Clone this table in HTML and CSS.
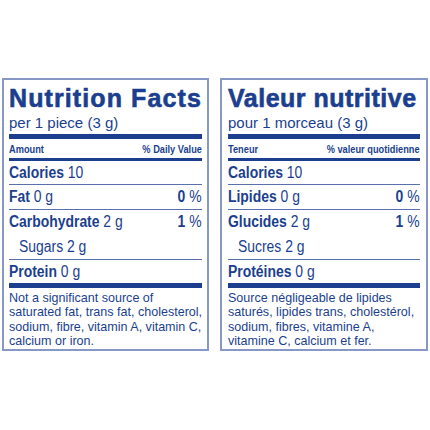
FILE: index.html
```html
<!DOCTYPE html>
<html lang="en">
<head>
<meta charset="utf-8">
<link rel="stylesheet" href="styles.css">
</head>
<body>
<div class="page">
  <section class="panel panel-en">
    <h1 class="title title-en">Nutrition Facts</h1>
    <div class="serving">per 1 piece (3 g)</div>
    <div class="bar-thick"></div>
    <div class="head-row"><span class="cl">Amount</span><span class="cr">% Daily Value</span></div>
    <div class="bar-mid"></div>
    <div class="row row-cal"><span class="cl"><b>Calories</b> 10</span></div>
    <div class="row row-line"><span class="cl"><b>Fat</b> 0 g</span><span class="cr"><b>0</b> %</span></div>
    <div class="row row-line"><span class="cl"><b>Carbohydrate</b> 2 g</span><span class="cr"><b>1</b> %</span></div>
    <div class="row row-sub"><span class="cl">Sugars 2 g</span></div>
    <div class="row row-line row-last"><span class="cl"><b>Protein</b> 0 g</span></div>
    <div class="bar-end"></div>
    <p class="note">Not a significant source of<br>saturated fat, trans fat, cholesterol,<br>sodium, fibre, vitamin A, vitamin C,<br>calcium or iron.</p>
  </section>
  <section class="panel panel-fr">
    <h1 class="title title-fr">Valeur nutritive</h1>
    <div class="serving">pour 1 morceau (3 g)</div>
    <div class="bar-thick"></div>
    <div class="head-row"><span class="cl">Teneur</span><span class="cr">% valeur quotidienne</span></div>
    <div class="bar-mid"></div>
    <div class="row row-cal"><span class="cl"><b>Calories</b> 10</span></div>
    <div class="row row-line"><span class="cl"><b>Lipides</b> 0 g</span><span class="cr"><b>0</b> %</span></div>
    <div class="row row-line"><span class="cl"><b>Glucides</b> 2 g</span><span class="cr"><b>1</b> %</span></div>
    <div class="row row-sub"><span class="cl">Sucres 2 g</span></div>
    <div class="row row-line row-last"><span class="cl"><b>Protéines</b> 0 g</span></div>
    <div class="bar-end"></div>
    <p class="note">Source négligeable de lipides<br>saturés, lipides trans, cholestérol,<br>sodium, fibres, vitamine A,<br>vitamine C, calcium et fer.</p>
  </section>
</div>
</body>
</html>
```
FILE: styles.css
```css
* { box-sizing: border-box; }
body {
  margin: 0;
  background: #fff;
  color: #1b3f8e;
  font-family: "Liberation Sans", Arial, sans-serif;
}
.page {
  display: flex;
  gap: 11px;
  padding: 78px 0 0 2px;
}
.panel {
  height: 273px;
  border: 2px solid #8797c6;
  padding: 4px 5px 0 5px;
  overflow: hidden;
}
.panel-en { width: 207px; }
.panel-fr { width: 208px; padding: 4px 6px 0 6px; }
.title {
  margin: 0;
  font-size: 25px;
  line-height: 28px;
  font-weight: 700;
  white-space: nowrap;
  -webkit-text-stroke: 0.6px currentColor;
}
.title-en { letter-spacing: 1.1px; }
.title-fr { letter-spacing: 0.5px; }
.serving {
  font-size: 15px;
  line-height: 17px;
  margin-top: 2px;
}
.bar-thick {
  height: 5px;
  background: #1b3f8e;
  margin-top: 3px;
}
.bar-end {
  height: 5px;
  background: #1b3f8e;
}
.cl, .cr {
  display: inline-block;
  white-space: nowrap;
  transform: scaleX(0.87);
}
.cl { transform-origin: left center; }
.cr { transform-origin: right center; }
.head-row {
  display: flex;
  justify-content: space-between;
  font-size: 11px;
  font-weight: 700;
  line-height: 18px;
  padding-top: 1px;
  height: 19px;
}
.head-row .cl, .head-row .cr { transform: scaleX(0.84); }
.bar-mid {
  height: 3px;
  background: #1b3f8e;
}
.row {
  display: flex;
  justify-content: space-between;
  font-size: 16px;
  height: 25px;
  line-height: 24px;
}
.row b { font-weight: 700; }
.row-cal { height: 23px; line-height: 23px; }
.row-line { border-top: 1px solid #5a70ac; }
.row-sub { padding-left: 10px; line-height: 25px; }
.row-last { height: 24px; line-height: 23px; }
.note {
  margin: 3px 0 0;
  width: 210px;
  font-size: 12.8px;
  line-height: 14.3px;
  white-space: nowrap;
  transform: scaleX(0.98);
  transform-origin: left top;
}
```
